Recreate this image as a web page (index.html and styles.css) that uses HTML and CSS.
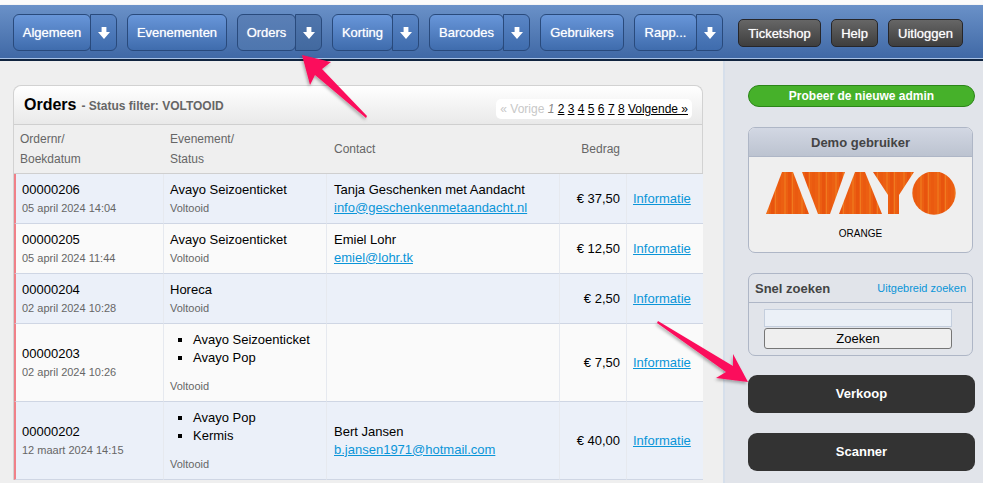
FILE: index.html
```html
<!DOCTYPE html>
<html lang="nl">
<head>
<meta charset="utf-8">
<title>Orders</title>
<link rel="stylesheet" href="styles.css">
</head>
<body>
<header class="topbar">
  <nav class="nav">
    <div class="group"><a class="btn w78">Algemeen</a><a class="btn drop"><svg class="down" viewBox="0 0 14 14"><path d="M4.6 1h4.8v5H13L7 13 1 6h3.6z"/></svg></a></div>
    <div class="group"><a class="btn w100">Evenementen</a></div>
    <div class="group"><a class="btn w59 active">Orders</a><a class="btn drop active"><svg class="down" viewBox="0 0 14 14"><path d="M4.6 1h4.8v5H13L7 13 1 6h3.6z"/></svg></a></div>
    <div class="group"><a class="btn w61">Korting</a><a class="btn drop"><svg class="down" viewBox="0 0 14 14"><path d="M4.6 1h4.8v5H13L7 13 1 6h3.6z"/></svg></a></div>
    <div class="group"><a class="btn w75">Barcodes</a><a class="btn drop"><svg class="down" viewBox="0 0 14 14"><path d="M4.6 1h4.8v5H13L7 13 1 6h3.6z"/></svg></a></div>
    <div class="group"><a class="btn w84">Gebruikers</a></div>
    <div class="group"><a class="btn w63">Rapp...</a><a class="btn drop"><svg class="down" viewBox="0 0 14 14"><path d="M4.6 1h4.8v5H13L7 13 1 6h3.6z"/></svg></a></div>
  </nav>
  <div class="tools">
    <a class="tool t83">Ticketshop</a>
    <a class="tool t47">Help</a>
    <a class="tool t75">Uitloggen</a>
  </div>
</header>

<div class="page">
  <main class="main">
    <section class="panel">
      <div class="panel-head">
        <h1>Orders</h1>
        <span class="filter">- Status filter: VOLTOOID</span>
        <div class="pager"><span class="off">« Vorige</span> <em>1</em> <a>2</a> <a>3</a> <a>4</a> <a>5</a> <a>6</a> <a>7</a> <a>8</a> <a>Volgende »</a></div>
      </div>
      <table class="orders">
        <colgroup><col class="c1"><col class="c2"><col class="c3"><col class="c4"><col class="c5"></colgroup>
        <thead>
          <tr><th class="h1st">Ordernr/<br>Boekdatum</th><th>Evenement/<br>Status</th><th class="h3">Contact</th><th class="right">Bedrag</th><th></th></tr>
        </thead>
        <tbody>
          <tr><td class="id">00000206<small>05 april 2024 14:04</small></td><td>Avayo Seizoenticket<small>Voltooid</small></td><td class="contact">Tanja Geschenken met Aandacht<a class="mail">info@geschenkenmetaandacht.nl</a></td><td class="amt">€ 37,50</td><td class="inf"><a>Informatie</a></td></tr>
          <tr><td class="id">00000205<small>05 april 2024 11:44</small></td><td>Avayo Seizoenticket<small>Voltooid</small></td><td class="contact">Emiel Lohr<a class="mail">emiel@lohr.tk</a></td><td class="amt">€ 12,50</td><td class="inf"><a>Informatie</a></td></tr>
          <tr><td class="id">00000204<small>02 april 2024 10:28</small></td><td>Horeca<small>Voltooid</small></td><td></td><td class="amt">€ 2,50</td><td class="inf"><a>Informatie</a></td></tr>
          <tr class="tall"><td class="id">00000203<small>02 april 2024 10:26</small></td><td><ul><li>Avayo Seizoenticket</li><li>Avayo Pop</li></ul><small>Voltooid</small></td><td></td><td class="amt">€ 7,50</td><td class="inf"><a>Informatie</a></td></tr>
          <tr class="tall"><td class="id">00000202<small>12 maart 2024 14:15</small></td><td><ul><li>Avayo Pop</li><li>Kermis</li></ul><small>Voltooid</small></td><td class="contact">Bert Jansen<a class="mail">b.jansen1971@hotmail.com</a></td><td class="amt">€ 40,00</td><td class="inf"><a>Informatie</a></td></tr>
        </tbody>
      </table>
    </section>
  </main>

  <aside class="side">
    <a class="try">Probeer de nieuwe admin</a>
    <section class="box demo">
      <h2>Demo gebruiker</h2>
      <div class="demo-body">
        <svg class="logo" viewBox="0 0 190 43" role="img" aria-label="Avayo">
          <defs>
            <pattern id="stripes" width="17" height="10" patternUnits="userSpaceOnUse">
              <rect width="17" height="10" fill="#ec5f12"/>
              <rect x="1" width="2" height="10" fill="#ee7019"/>
              <rect x="5" width="3" height="10" fill="#e8540e"/>
              <rect x="9" width="1" height="10" fill="#f07a20"/>
              <rect x="12" width="3" height="10" fill="#ea5a10"/>
            </pattern>
          </defs>
          <g fill="url(#stripes)">
            <polygon points="16,0 27,0 43,42 0,42"/>
            <polygon points="36,0 79,0 64,42 52,42"/>
            <polygon points="89,0 99,0 116,42 73,42"/>
            <polygon points="107,0 148,0 133,23 133,42 122,42 122,23"/>
            <circle cx="168" cy="21" r="21.7"/>
          </g>
        </svg>
        <p>ORANGE</p>
      </div>
    </section>
    <section class="box search">
      <div class="search-head"><h3>Snel zoeken</h3><a>Uitgebreid zoeken</a></div>
      <form class="search-body">
        <input type="text" class="field" aria-label="Zoeken">
        <button type="button" class="go">Zoeken</button>
      </form>
    </section>
    <a class="big first">Verkoop</a>
    <a class="big">Scanner</a>
  </aside>
</div>

<svg class="arrows" viewBox="0 0 983 483" aria-hidden="true">
  <defs>
    <filter id="sh" x="-20%" y="-20%" width="140%" height="140%"><feDropShadow dx="-1" dy="2" stdDeviation="1.5" flood-color="#000" flood-opacity=".3"/></filter>
  </defs>
  <g fill="#fb0f5b" filter="url(#sh)">
    <polygon points="302,55 331,62 322,69 367,116 366,118 315,75 310,85"/>
    <polygon points="748,382 716,378 726,372 657,323 658,321 733,366 733,354"/>
  </g>
</svg>
</body>
</html>
```

FILE: styles.css
```css
* { box-sizing: border-box; }
html, body { height: 100%; overflow: hidden; }
body {
  margin: 0;
  padding-top: 5px;
  background: #fafafa;
  font-family: "Liberation Sans", Arial, sans-serif;
  font-size: 14px;
  color: #000;
}
a { cursor: pointer; }

/* top bar */
.topbar {
  height: 56px;
  display: flex;
  align-items: flex-start;
  padding: 9px 20px 0 13px;
  background: linear-gradient(#6a91c8, #3f68a5);
  border-bottom: 2px solid #10243f;
  box-shadow: inset 0 -1px 0 #a9c3e6, 0 1px 2px rgba(0,0,0,.35);
}
.nav { display: flex; gap: 10px; }
.group { display: flex; }
.btn {
  height: 37px;
  display: flex;
  align-items: center;
  justify-content: center;
  color: #fff;
  font-size: 13px;
  text-shadow: 0 0 1px rgba(255,255,255,.7);
  border: 1px solid #294a7c;
  border-radius: 6px;
  background: linear-gradient(#6896d9, #3f6cad);
}
.btn.active { background: linear-gradient(#5a7fb6, #4e76ae); }
.btn.drop {
  width: 27px;
  margin-left: -1px;
  border-radius: 0 6px 6px 0;
  background: linear-gradient(#5a86c6, #3f6cad);
}
.btn.drop.active { background: linear-gradient(#5076ad, #42699f); }
.group .btn:first-child:not(:last-child) { position: relative; z-index: 1; }
.down { width: 14px; height: 14px; fill: #fff; }
.w78 { width: 78px; }
.w100 { width: 100px; }
.w59 { width: 59px; }
.w61 { width: 61px; }
.w75 { width: 75px; }
.w84 { width: 84px; }
.w63 { width: 63px; }
.tools { display: flex; gap: 10px; margin: 5px 0 0 15px; }
.tool {
  height: 28px;
  display: flex;
  align-items: center;
  justify-content: center;
  color: #fff;
  font-size: 13px;
  text-shadow: 0 0 1px rgba(255,255,255,.7);
  border: 1px solid #26262a;
  border-radius: 5px;
  background: linear-gradient(#666, #3e3e3e);
}
.t83 { width: 83px; }
.t47 { width: 47px; }
.t75 { width: 75px; }

/* page */
.page { display: flex; height: 422px; }
.main {
  width: 723px;
  background: #efefef;
  padding: 24px 20px 0 13px;
}
.panel {
  background: #efefef;
  border: 1px solid #d2d2d2;
  border-bottom: 0;
  border-radius: 8px 8px 0 0;
}
.panel-head {
  height: 39px;
  display: flex;
  align-items: center;
  padding: 0 10px;
  background: linear-gradient(#fff, #e9e9e9);
  border-bottom: 1px solid #cfcfcf;
  border-radius: 8px 8px 0 0;
}
.panel-head h1 { margin: 0; font-size: 16px; font-weight: bold; }
.filter { margin-left: 5px; font-size: 12px; font-weight: bold; color: #666; padding-top: 2px; }
.pager {
  margin-left: auto;
  margin-top: 8px;
  padding: 0 4px;
  height: 20px;
  line-height: 20px;
  font-size: 12px;
  background: #fff;
  border-radius: 5px;
  white-space: nowrap;
}
.pager a { color: #000; text-decoration: underline; }
.pager em { color: #888; }
.pager .off { color: #c8c8c8; }

/* table */
.orders {
  width: 689px;
  table-layout: fixed;
  border-collapse: separate;
  border-spacing: 0;
  font-size: 13px;
}
.c1 { width: 149px; }
.c2 { width: 163px; }
.c3 { width: 233px; }
.c4 { width: 67px; }
.c5 { width: 77px; }
.orders th {
  height: 49px;
  padding: 0 6px 0 7px;
  text-align: left;
  font-weight: normal;
  font-size: 12px;
  color: #666;
  line-height: 20px;
  border-bottom: 1px solid #cfcfcf;
}
.orders th.h1st { padding-left: 6px; }
.orders th.h3 { padding-left: 8px; }
.orders th.right { text-align: right; }
.orders td {
  height: 50px;
  padding: 0 6px;
  vertical-align: middle;
  background: #fafafa;
  border-bottom: 1px solid #cfd6e4;
  border-left: 1px solid #e6e9ef;
  line-height: 18px;
}
.orders tbody tr:nth-child(odd) td { background: #ebf0f9; }
.orders td:first-child { border-left: 2px solid #f08088; }
.orders td.contact { padding-left: 7px; }
.orders .tall td { height: 78px; }
.orders td small {
  display: block;
  font-size: 11px;
  color: #666;
}
.orders ul { margin: 1px 0 10px; padding: 0 0 0 23px; list-style: square; }
.orders li { line-height: 18px; }
.mail, .inf a { color: #0a95d8; text-decoration: underline; }
.mail { display: block; }
.amt { text-align: right; white-space: nowrap; }
.inf { white-space: nowrap; }

/* sidebar */
.side {
  width: 260px;
  background: #e1e4ea;
  border-left: 2px solid #d6dfeb;
  padding: 24px 8px 0 23px;
}
.try {
  display: block;
  height: 22px;
  line-height: 20px;
  text-align: center;
  color: #fff;
  font-size: 12px;
  font-weight: bold;
  background: #46b12a;
  border: 1px solid #2b8518;
  border-radius: 11px;
}
.box {
  width: 225px;
  border: 1px solid #aeb6c6;
  border-radius: 7px;
  background: #efefef;
}
.demo { margin-top: 20px; height: 126px; }
.demo h2 {
  margin: 0;
  height: 29px;
  line-height: 29px;
  text-align: center;
  font-size: 13px;
  color: #444;
  background: linear-gradient(#d2d7e3, #bcc3d0);
  border-bottom: 1px solid #aeb6c6;
  border-radius: 6px 6px 0 0;
}
.demo-body { display: flex; flex-direction: column; align-items: center; padding-top: 15px; }
.logo { width: 190px; height: 43px; display: block; }
.demo-body p { margin: 13px 0 0; font-size: 10px; line-height: 12px; }
.search { margin-top: 20px; height: 83px; background: #e1e4ea; }
.search-head {
  height: 29px;
  display: flex;
  align-items: center;
  justify-content: space-between;
  padding: 0 6px;
  border-bottom: 1px solid #aeb6c6;
}
.search-head h3 { margin: 0; font-size: 13px; color: #444; }
.search-head a { font-size: 11px; color: #0a95d8; }
.search-body { display: flex; flex-direction: column; gap: 1px; padding: 6px 20px 0 15px; }
.field {
  width: 188px;
  height: 18px;
  padding: 0;
  border: 1px solid #c4cedd;
  background: #ebf0f7;
}
.go {
  width: 188px;
  height: 21px;
  padding: 0;
  font: 13px "Liberation Sans", Arial, sans-serif;
  color: #000;
  background: #efefef;
  border: 1px solid #767676;
  border-radius: 3px;
}
.big {
  display: block;
  width: 227px;
  height: 38px;
  margin-top: 20px;
  line-height: 38px;
  text-align: center;
  color: #fff;
  font-size: 13px;
  font-weight: bold;
  background: #333;
  border-radius: 9px;
}
.big.first { margin-top: 19px; }

/* annotation arrows */
.arrows { position: absolute; left: 0; top: 0; width: 983px; height: 483px; pointer-events: none; }
```
